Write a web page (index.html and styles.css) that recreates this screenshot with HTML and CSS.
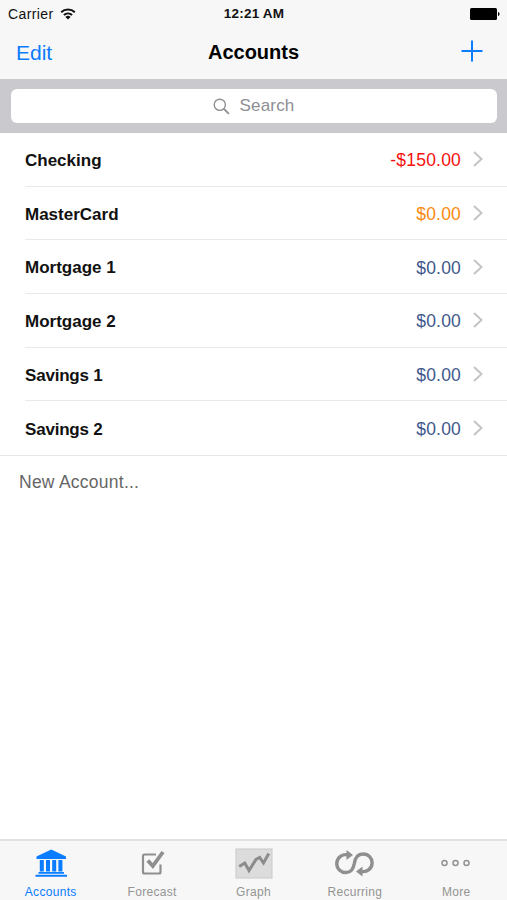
FILE: index.html
```html
<!DOCTYPE html>
<html lang="en">
  <head>
    <meta charset="UTF-8" />
    <meta name="viewport" content="width=device-width, initial-scale=1.0" />
    <title>Accounts</title>
    <link rel="stylesheet" href="styles.css">
  </head>
  <body>
    <div class="app">
      <header class="header">
        <div class="status">
          <div class="carrier">
            <span class="carrier-name">Carrier</span>
            <svg width="16" height="12" viewBox="0 0 16 12" fill="none" stroke="#111" stroke-width="2">
              <path d="M1.2 4.3a9.8 9.8 0 0 1 13.6 0" />
              <path d="M3.9 7.1a6 6 0 0 1 8.2 0" />
              <path d="M8 11.6 5.4 9a3.8 3.8 0 0 1 5.2 0z" fill="#111" stroke="none" />
            </svg>
          </div>
          <span class="time">12:21 AM</span>
          <svg class="battery" width="30" height="12" viewBox="0 0 30 12">
            <rect width="27" height="12" rx="1.5" />
            <path d="M28 4c2 .4 2 3.6 0 4z" />
          </svg>
        </div>
        <nav class="nav">
          <a class="edit">Edit</a>
          <h1 class="title">Accounts</h1>
          <svg class="add" width="22" height="22" viewBox="0 0 22 22" fill="none" stroke="#0a7cff" stroke-width="2">
            <path d="M11 .5v21M.5 11h21" />
          </svg>
        </nav>
      </header>

      <div class="search">
        <div class="search-box">
          <svg width="17" height="17" viewBox="0 0 17 17" fill="none" stroke="#8e8e93" stroke-width="1.4">
            <circle cx="6.8" cy="6.8" r="5.6" />
            <path d="M10.9 10.9l5 5" stroke-width="1.8" />
          </svg>
          <span class="search-text">Search</span>
        </div>
      </div>

      <ul class="list">
        <li class="row">
          <span class="name">Checking</span>
          <span class="amount negative">-$150.00</span>
          <svg class="arrow" viewBox="0 0 10 16"><path d="M1 1l7.5 7L1 15" /></svg>
        </li>
        <li class="row">
          <span class="name">MasterCard</span>
          <span class="amount credit">$0.00</span>
          <svg class="arrow" viewBox="0 0 10 16"><path d="M1 1l7.5 7L1 15" /></svg>
        </li>
        <li class="row">
          <span class="name">Mortgage 1</span>
          <span class="amount">$0.00</span>
          <svg class="arrow" viewBox="0 0 10 16"><path d="M1 1l7.5 7L1 15" /></svg>
        </li>
        <li class="row">
          <span class="name">Mortgage 2</span>
          <span class="amount">$0.00</span>
          <svg class="arrow" viewBox="0 0 10 16"><path d="M1 1l7.5 7L1 15" /></svg>
        </li>
        <li class="row">
          <span class="name savings">Savings 1</span>
          <span class="amount">$0.00</span>
          <svg class="arrow" viewBox="0 0 10 16"><path d="M1 1l7.5 7L1 15" /></svg>
        </li>
        <li class="row">
          <span class="name savings">Savings 2</span>
          <span class="amount">$0.00</span>
          <svg class="arrow" viewBox="0 0 10 16"><path d="M1 1l7.5 7L1 15" /></svg>
        </li>
      </ul>
      <div class="new-account">New Account...</div>

      <footer class="tabs">
        <a class="tab active">
          <svg width="40" height="32" viewBox="0 0 40 32" fill="#0a7cff">
            <path d="M20.2 1.5 35 8.5V11H5.5V8.5z" />
            <path d="M8.8 12h4v11.500h-4zM15 12h4v11.500h-4zM21.200 12h4v11.500h-4zM27.400 12h4v11.500h-4z" />
            <path d="M7.500 24h25.500v1.700H7.500zM4.500 26.800H36v1.900H4.500z" />
          </svg>
          <span>Accounts</span>
        </a>
        <a class="tab">
          <svg width="40" height="32" viewBox="0 0 40 32" fill="none" stroke="#8f8f8f">
            <path d="M24 6.500H12.500q-1.500 0-1.500 1.500v16q0 1.500 1.500 1.500H27q1.500 0 1.500-1.500V16.500" stroke-width="2.200" />
            <path d="M15.800 12.500l5 5.500L31 4" stroke-width="3.800" />
          </svg>
          <span>Forecast</span>
        </a>
        <a class="tab">
          <svg width="40" height="32" viewBox="0 0 40 32" fill="none">
            <rect x="2" y="1" width="36" height="29" fill="#dcdcdc" stroke="#cacaca" />
            <path d="M5.200 18.500l5.600-3.500 4.200 7.500L22 11.500l3.700-2 3.800 5.500L34.800 5.500" stroke="#8c8c8c" stroke-width="3" />
          </svg>
          <span>Graph</span>
        </a>
        <a class="tab">
          <svg width="40" height="32" viewBox="0 0 40 32" fill="none" stroke="#8f8f8f" stroke-width="3.4">
            <path d="M13 7A8.900 8.900 0 1 0 12 24.400C17 24 18.500 20 19.300 15.500 20 10 23 6 28 6A8.800 8.800 0 1 1 27 23.500" />
            <path d="M11.500 2 18 7 11.500 12zM27.500 18.500v10L21 23.500z" fill="#8f8f8f" stroke="none" />
          </svg>
          <span>Recurring</span>
        </a>
        <a class="tab">
          <svg width="40" height="32" viewBox="0 0 40 32" fill="none" stroke="#929292" stroke-width="1.5">
            <circle cx="8.500" cy="15" r="2.5" />
            <circle cx="19.500" cy="15" r="2.5" />
            <circle cx="30.500" cy="15" r="2.5" />
          </svg>
          <span>More</span>
        </a>
      </footer>
    </div>
  </body>
</html>
```
FILE: styles.css
```css
* {
  margin: 0;
  padding: 0;
  box-sizing: border-box;
}

body {
  width: 100vw;
  height: 100vh;
  overflow: hidden;
  background-color: #fff;
  font-family: 'Liberation Sans', Arial, sans-serif;
}

svg {
  display: block;
  flex-shrink: 0;
}

.app {
  height: 100%;
  display: flex;
  flex-direction: column;
}

.header {
  height: 79px;
  background-color: #f7f7f7;
}

.status {
  height: 27px;
  padding: 0 7px 0 8px;
  display: grid;
  grid-template-columns: 1fr auto 1fr;
  align-items: center;
  font-size: 14px;
  color: #111;
}

.carrier {
  display: flex;
  align-items: center;
  gap: 6px;
}

.carrier-name {
  letter-spacing: 0.4px;
}

.time {
  font-weight: bold;
  font-size: 13.5px;
  letter-spacing: 0.2px;
}

.battery {
  justify-self: end;
}

.nav {
  height: 52px;
  padding: 0 24px 2px 16px;
  display: grid;
  grid-template-columns: 1fr auto 1fr;
  align-items: center;
}

.edit {
  padding-top: 1px;
  font-size: 21px;
  color: #0a7cff;
}

.title {
  padding-left: 8px;
  font-size: 20px;
  color: #000;
}

.add {
  justify-self: end;
  margin-bottom: 2px;
}

.search {
  height: 54px;
  padding: 10px 10px 10px 11px;
  background-color: #c9c9ce;
}

.search-box {
  height: 34px;
  display: flex;
  align-items: center;
  justify-content: center;
  gap: 9px;
  border-radius: 6px;
  background-color: #fff;
}

.search-text {
  font-size: 17px;
  letter-spacing: 0.2px;
  color: #8e8e93;
}

.list {
  list-style: none;
  border-bottom: 1px solid #e6e6e6;
}

.row {
  height: 53.7px;
  margin-left: 25px;
  padding-right: 24px;
  display: flex;
  align-items: center;
  border-bottom: 1px solid #e9e9e9;
}

.row:last-child {
  border-bottom: none;
}

.name {
  flex: 1;
  padding-top: 3px;
  font-size: 17px;
  font-weight: bold;
  color: #111;
}

.savings {
  letter-spacing: -0.2px;
}

.amount {
  padding-top: 3px;
  font-size: 17.5px;
  letter-spacing: 0.2px;
  color: #40588c;
}

.negative {
  color: #f5110d;
}

.credit {
  color: #f98a10;
}

.arrow {
  width: 10px;
  height: 16px;
  margin-left: 12px;
  fill: none;
  stroke: #c4c4c8;
  stroke-width: 2;
}

.new-account {
  padding: 16px 19px;
  font-size: 17.5px;
  letter-spacing: 0.25px;
  color: #666;
}

.tabs {
  height: 61px;
  margin-top: auto;
  padding-top: 7px;
  display: flex;
  border-top: 2px solid #e2e2e2;
  background-color: #f7f7f7;
}

.tab {
  flex: 1;
  display: flex;
  flex-direction: column;
  align-items: center;
  gap: 5px;
  font-size: 12px;
  letter-spacing: 0.3px;
  color: #949494;
}

.active {
  color: #0a7cff;
}
```
